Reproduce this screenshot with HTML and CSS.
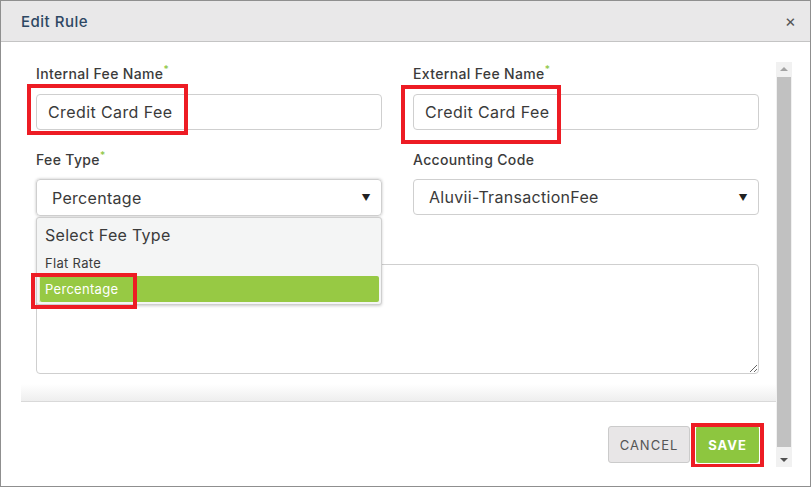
FILE: index.html
```html
<!DOCTYPE html>
<html lang="en">
<head>
    <meta charset="UTF-8">
    <title>Edit Rule</title>
    <link rel="stylesheet" href="styles.css">
</head>
<body>
    <div class="modal">
        <div class="modal-header">
            <h4>Edit Rule</h4>
            <button class="close" type="button">&times;</button>
        </div>
        <div class="modal-body">
            <div class="scroll-area">
                <form class="rule-form">
                    <div class="row">
                        <div class="field">
                            <label>Internal Fee Name<sup>*</sup></label>
                            <input class="input" type="text" value="Credit Card Fee">
                            <span class="mark mark-internal"></span>
                        </div>
                        <div class="field">
                            <label>External Fee Name<sup>*</sup></label>
                            <input class="input" type="text" value="Credit Card Fee">
                            <span class="mark mark-external"></span>
                        </div>
                    </div>
                    <div class="row">
                        <div class="field">
                            <label>Fee Type<sup>*</sup></label>
                            <div class="select open">
                                <span>Percentage</span>
                                <span class="caret">&#9660;</span>
                            </div>
                            <ul class="options">
                                <li class="placeholder">Select Fee Type</li>
                                <li>Flat Rate</li>
                                <li class="active">Percentage</li>
                            </ul>
                            <span class="mark mark-option"></span>
                        </div>
                        <div class="field">
                            <label>Accounting Code</label>
                            <div class="select">
                                <span>Aluvii-TransactionFee</span>
                                <span class="caret">&#9660;</span>
                            </div>
                        </div>
                    </div>
                    <!-- label sits under the open dropdown -->
                    <div class="field notes">
                        <textarea class="textarea"></textarea>
                    </div>
                </form>
                <div class="footer-shade"></div>
                <div class="modal-footer">
                    <button class="btn btn-cancel" type="button">Cancel</button>
                    <span class="save-wrap">
                        <button class="btn btn-save" type="button">Save</button>
                        <span class="mark mark-save"></span>
                    </span>
                </div>
            </div>
            <div class="scrollbar">
                <span class="arrow up"></span>
                <span class="thumb"></span>
                <span class="arrow down"></span>
            </div>
        </div>
    </div>
</body>
</html>
```

FILE: styles.css
```css
body {
    margin: 0;
    font-family: 'Inter', 'Open Sans', sans-serif;
    background-color: #fff;
}

.modal {
    width: 811px;
    height: 487px;
    box-sizing: border-box;
    border: 1px solid #8f8f8f;
    background-color: #fff;
    display: flex;
    flex-direction: column;
}

.modal-header {
    height: 40px;
    background-color: #e9e8e9;
    border-bottom: 1px solid #c4c4c4;
    display: flex;
    align-items: center;
    justify-content: space-between;
    padding: 0 14px 0 20px;
}

.modal-header h4 {
    margin: 0;
    font-size: 15px;
    font-weight: 500;
    letter-spacing: 0.5px;
    color: #2d4763;
}

.close {
    border: none;
    background: none;
    padding: 0;
    font-size: 17px;
    color: #555;
    font-family: 'Inter', sans-serif;
    cursor: pointer;
}

.modal-body {
    flex: 1;
    display: flex;
    padding: 20px 18px 19px 20px;
    min-height: 0;
}

.scroll-area {
    width: 755px;
    overflow: hidden;
}

.rule-form {
    padding: 2px 17px 0 15px;
}

.row {
    display: grid;
    grid-template-columns: 346px 346px;
    column-gap: 31px;
}

.field {
    position: relative;
    display: flex;
    flex-direction: column;
    margin-bottom: 18px;
}

.row:first-child .field {
    margin-bottom: 20px;
}

.field.notes {
    padding-top: 30px;
}

label {
    font-size: 14px;
    line-height: 20px;
    font-weight: 500;
    letter-spacing: 0.35px;
    color: #3b3b3b;
    margin-bottom: 10px;
}

.row:nth-child(2) label {
    margin-bottom: 9px;
}

sup {
    color: #8dc63f;
    font-size: 10px;
    line-height: 0;
    vertical-align: 6px;
}

.input {
    height: 36px;
    box-sizing: border-box;
    border: 1px solid #cfcfcf;
    border-radius: 4px;
    padding: 0 11px;
    font-family: inherit;
    font-size: 16px;
    letter-spacing: 0.4px;
    color: #3a3a3a;
}

.select {
    height: 36px;
    box-sizing: border-box;
    border: 1px solid #cfcfcf;
    border-radius: 4px;
    display: flex;
    align-items: center;
    justify-content: space-between;
    padding: 0 10px 0 15px;
    font-size: 16px;
    letter-spacing: 0.3px;
    color: #3a3a3a;
}

.select.open {
    height: 37px;
    box-shadow: 0 0 3px rgba(0, 0, 0, 0.25);
}

.caret {
    font-size: 9px;
    color: #222;
}

.options {
    position: absolute;
    top: 67px;
    left: 0;
    width: 346px;
    box-sizing: border-box;
    margin: 0;
    padding: 0 2px 2px;
    list-style: none;
    background-color: #f4f5f5;
    border: 1px solid #cfcfcf;
    border-radius: 3px;
    box-shadow: 0 1px 3px rgba(0, 0, 0, 0.2);
    z-index: 2;
}

.options li {
    height: 26px;
    line-height: 26px;
    padding-left: 6px;
    font-size: 13px;
    letter-spacing: 0.3px;
    color: #3b3b3b;
}

.options .placeholder {
    height: 32px;
    line-height: 34px;
    font-size: 16px;
}

.options .active {
    background-color: #97c944;
    color: #fff;
    border-radius: 2px;
    box-shadow: inset 1px 0 0 #e6f2d4;
}

.textarea {
    height: 110px;
    box-sizing: border-box;
    border: 1px solid #cfcfcf;
    border-radius: 4px;
    font-family: inherit;
}

.footer-shade {
    margin-top: -8px;
    height: 17px;
    background: linear-gradient(#fff, #eeeeee);
    border-bottom: 1px solid #d9d9d9;
}

.modal-footer {
    display: flex;
    justify-content: flex-end;
    gap: 6px;
    padding: 24px 17px 0 0;
}

.btn {
    height: 37px;
    border-radius: 3px;
    font-family: inherit;
    font-size: 13px;
    text-transform: uppercase;
    letter-spacing: 1px;
    cursor: pointer;
}

.btn-cancel {
    width: 82px;
    background-color: #e8e6e7;
    border: 1px solid #cbcbcb;
    color: #555;
    font-weight: 400;
}

.btn-save {
    width: 63px;
    background-color: #8dc63f;
    border: none;
    color: #fff;
    font-weight: 700;
}

.save-wrap {
    position: relative;
}

.mark {
    position: absolute;
    border: 4px solid #ed1c24;
    box-sizing: border-box;
    z-index: 3;
}

.mark-internal {
    left: -9px;
    top: 20px;
    width: 161px;
    height: 51px;
}

.mark-external {
    left: -12px;
    top: 21px;
    width: 160px;
    height: 59px;
}

.mark-option {
    left: -5px;
    top: 123px;
    width: 106px;
    height: 36px;
}

.mark-save {
    left: -5px;
    top: -3px;
    width: 73px;
    height: 45px;
}

.scrollbar {
    width: 16px;
    background-color: #f1f1f1;
    display: flex;
    flex-direction: column;
    align-items: center;
}

.arrow {
    height: 15px;
    width: 16px;
    position: relative;
}

.arrow::after {
    content: '';
    position: absolute;
    left: 4px;
    border-left: 4px solid transparent;
    border-right: 4px solid transparent;
}

.arrow.up::after {
    top: 5px;
    border-bottom: 4px solid #a3a3a3;
}

.arrow.down::after {
    top: 6px;
    border-top: 4px solid #505050;
}

.thumb {
    flex: 1;
    width: 14px;
    margin-bottom: 5px;
    background-color: #c1c1c1;
}
```
